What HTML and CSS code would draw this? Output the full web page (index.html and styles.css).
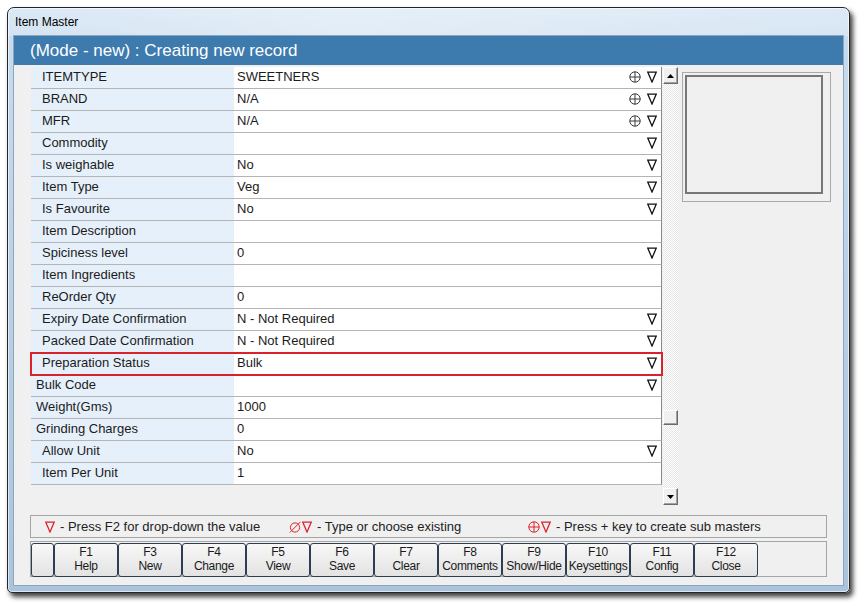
FILE: index.html
```html
<!DOCTYPE html>
<html>
<head>
<meta charset="utf-8">
<link rel="stylesheet" href="styles.css">
</head>
<body>
<div class="window">
  <div class="titlebar">Item Master</div>
  <div class="client">
    <div class="header">(Mode - new) : Creating new record</div>
    <div class="main">
      <div class="grid">
        <div class="row"><div class="lbl">ITEMTYPE</div><div class="val"><span class="txt">SWEETNERS</span><span class="icons"><svg class="plus" width="12" height="12" viewBox="0 0 12 12"><circle cx="6" cy="6" r="5.2"/><path d="M0.8 6H11.2M6 0.8V11.2"/></svg><svg class="nabla" width="10" height="12" viewBox="0 0 10 12"><path d="M0.8 1.2H9.2L5 11Z"/></svg></span></div></div>
        <div class="row"><div class="lbl">BRAND</div><div class="val"><span class="txt">N/A</span><span class="icons"><svg class="plus" width="12" height="12" viewBox="0 0 12 12"><circle cx="6" cy="6" r="5.2"/><path d="M0.8 6H11.2M6 0.8V11.2"/></svg><svg class="nabla" width="10" height="12" viewBox="0 0 10 12"><path d="M0.8 1.2H9.2L5 11Z"/></svg></span></div></div>
        <div class="row"><div class="lbl">MFR</div><div class="val"><span class="txt">N/A</span><span class="icons"><svg class="plus" width="12" height="12" viewBox="0 0 12 12"><circle cx="6" cy="6" r="5.2"/><path d="M0.8 6H11.2M6 0.8V11.2"/></svg><svg class="nabla" width="10" height="12" viewBox="0 0 10 12"><path d="M0.8 1.2H9.2L5 11Z"/></svg></span></div></div>
        <div class="row"><div class="lbl">Commodity</div><div class="val"><span class="txt"></span><span class="icons"><svg class="nabla" width="10" height="12" viewBox="0 0 10 12"><path d="M0.8 1.2H9.2L5 11Z"/></svg></span></div></div>
        <div class="row"><div class="lbl">Is weighable</div><div class="val"><span class="txt">No</span><span class="icons"><svg class="nabla" width="10" height="12" viewBox="0 0 10 12"><path d="M0.8 1.2H9.2L5 11Z"/></svg></span></div></div>
        <div class="row"><div class="lbl">Item Type</div><div class="val"><span class="txt">Veg</span><span class="icons"><svg class="nabla" width="10" height="12" viewBox="0 0 10 12"><path d="M0.8 1.2H9.2L5 11Z"/></svg></span></div></div>
        <div class="row"><div class="lbl">Is Favourite</div><div class="val"><span class="txt">No</span><span class="icons"><svg class="nabla" width="10" height="12" viewBox="0 0 10 12"><path d="M0.8 1.2H9.2L5 11Z"/></svg></span></div></div>
        <div class="row"><div class="lbl">Item Description</div><div class="val"><span class="txt"></span></div></div>
        <div class="row"><div class="lbl">Spiciness level</div><div class="val"><span class="txt">0</span><span class="icons"><svg class="nabla" width="10" height="12" viewBox="0 0 10 12"><path d="M0.8 1.2H9.2L5 11Z"/></svg></span></div></div>
        <div class="row"><div class="lbl">Item Ingredients</div><div class="val"><span class="txt"></span></div></div>
        <div class="row"><div class="lbl">ReOrder Qty</div><div class="val"><span class="txt">0</span></div></div>
        <div class="row"><div class="lbl">Expiry Date Confirmation</div><div class="val"><span class="txt">N - Not Required</span><span class="icons"><svg class="nabla" width="10" height="12" viewBox="0 0 10 12"><path d="M0.8 1.2H9.2L5 11Z"/></svg></span></div></div>
        <div class="row"><div class="lbl">Packed Date Confirmation</div><div class="val"><span class="txt">N - Not Required</span><span class="icons"><svg class="nabla" width="10" height="12" viewBox="0 0 10 12"><path d="M0.8 1.2H9.2L5 11Z"/></svg></span></div></div>
        <div class="row selected"><div class="lbl">Preparation Status</div><div class="val"><span class="txt">Bulk</span><span class="icons"><svg class="nabla" width="10" height="12" viewBox="0 0 10 12"><path d="M0.8 1.2H9.2L5 11Z"/></svg></span></div></div>
        <div class="row"><div class="lbl shallow">Bulk Code</div><div class="val"><span class="txt"></span><span class="icons"><svg class="nabla" width="10" height="12" viewBox="0 0 10 12"><path d="M0.8 1.2H9.2L5 11Z"/></svg></span></div></div>
        <div class="row"><div class="lbl shallow">Weight(Gms)</div><div class="val"><span class="txt">1000</span></div></div>
        <div class="row"><div class="lbl shallow">Grinding Charges</div><div class="val"><span class="txt">0</span></div></div>
        <div class="row"><div class="lbl">Allow Unit</div><div class="val"><span class="txt">No</span><span class="icons"><svg class="nabla" width="10" height="12" viewBox="0 0 10 12"><path d="M0.8 1.2H9.2L5 11Z"/></svg></span></div></div>
        <div class="row"><div class="lbl">Item Per Unit</div><div class="val"><span class="txt">1</span></div></div>
      </div>
      <div class="scrollbar">
        <div class="sbtn"><svg width="7" height="4" viewBox="0 0 7 4"><path d="M0 4H7L3.5 0Z"/></svg></div>
        <div class="track track-top"></div>
        <div class="thumb"></div>
        <div class="track track-bottom"></div>
        <div class="sbtn"><svg width="7" height="4" viewBox="0 0 7 4"><path d="M0 0H7L3.5 4Z"/></svg></div>
      </div>
      <div class="preview"><div class="preview-inner"></div></div>
    </div>
    <div class="legend">
      <span class="leg leg1"><svg class="nabla red" width="10" height="12" viewBox="0 0 10 12"><path d="M0.8 1.2H9.2L5 11Z"/></svg><span class="legtxt">- Press F2 for drop-down the value</span></span>
      <span class="leg leg2"><svg class="empty red" width="12" height="12" viewBox="0 0 12 12"><circle cx="6" cy="6.5" r="4.6"/><path d="M0.8 11.5L11.5 0.8"/></svg><svg class="nabla red" width="10" height="12" viewBox="0 0 10 12"><path d="M0.8 1.2H9.2L5 11Z"/></svg><span class="legtxt">- Type or choose existing</span></span>
      <span class="leg leg3"><svg class="plus red" width="12" height="12" viewBox="0 0 12 12"><circle cx="6" cy="6" r="5.2"/><path d="M0.8 6H11.2M6 0.8V11.2"/></svg><svg class="nabla red" width="10" height="12" viewBox="0 0 10 12"><path d="M0.8 1.2H9.2L5 11Z"/></svg><span class="legtxt">- Press + key to create sub masters</span></span>
    </div>
    <div class="buttons">
      <div class="fbtn blank"></div>
      <div class="fbtn"><span>F1</span><span>Help</span></div>
      <div class="fbtn"><span>F3</span><span>New</span></div>
      <div class="fbtn"><span>F4</span><span>Change</span></div>
      <div class="fbtn"><span>F5</span><span>View</span></div>
      <div class="fbtn"><span>F6</span><span>Save</span></div>
      <div class="fbtn"><span>F7</span><span>Clear</span></div>
      <div class="fbtn"><span>F8</span><span>Comments</span></div>
      <div class="fbtn"><span>F9</span><span>Show/Hide</span></div>
      <div class="fbtn"><span>F10</span><span>Keysettings</span></div>
      <div class="fbtn"><span>F11</span><span>Config</span></div>
      <div class="fbtn"><span>F12</span><span>Close</span></div>
    </div>
  </div>
</div>
</body>
</html>
```
FILE: styles.css
```css
html, body {
  margin: 0;
  padding: 0;
  background: #ffffff;
}
body {
  font-family: "Liberation Sans", Arial, sans-serif;
  width: 864px;
  height: 607px;
  overflow: hidden;
}
.window {
  margin: 7px 0 0 7px;
  width: 841px;
  height: 584px;
  border: 1px solid #262626;
  border-radius: 7px 7px 5px 5px;
  background: linear-gradient(180deg, #d2e3f3 0%, #c7dbee 6%, #bcd2e8 40%, #aac4de 100%);
  box-shadow: 3px 4px 5px rgba(0, 0, 0, 0.75), inset 0 0 0 1px rgba(255, 255, 255, 0.6);
  display: flex;
  flex-direction: column;
}
.titlebar {
  height: 28px;
  line-height: 28px;
  padding-left: 7px;
  font-size: 12px;
  color: #000;
  background: linear-gradient(90deg, rgba(255,255,255,0.2), rgba(255,255,255,0.45) 40%, rgba(255,255,255,0.25));
  border-radius: 6px 6px 0 0;
}
.client {
  margin: 0 6px 0 6px;
  width: 829px;
  height: 549px;
  background: #f0f0f0;
  box-shadow: 0 0 0 1px #8ea5bb;
  display: flex;
  flex-direction: column;
}
.header {
  height: 29px;
  line-height: 29px;
  background: #3d7aae;
  color: #ffffff;
  font-size: 17px;
  padding-left: 16px;
  flex: none;
}
.main {
  display: flex;
  align-items: flex-start;
  padding: 2px 0 0 17px;
  height: 438px;
  flex: none;
}
.grid {
  width: 631px;
  height: 438px;
  display: flex;
  flex-direction: column;
}
.row {
  display: flex;
  height: 21px;
  border-bottom: 1px solid #b4b4b4;
  border-right: 1px solid #8a8a8a;
  font-size: 13px;
  color: #1b1b1b;
}
.row.selected {
  outline: 2px solid #d8222c;
  outline-offset: -1px;
  position: relative;
  z-index: 1;
}
.lbl {
  width: 192px;
  padding-left: 11px;
  background: #e6f0fa;
  line-height: 19px;
  white-space: nowrap;
}
.lbl.shallow {
  width: 198px;
  padding-left: 5px;
}
.val {
  flex: 1;
  display: flex;
  align-items: flex-start;
  background: #ffffff;
  padding-left: 3px;
  padding-right: 4px;
}
.txt {
  flex: 1;
  line-height: 19px;
}
.icons {
  display: flex;
  align-items: center;
  gap: 6px;
  margin-top: 4px;
}
svg.plus circle, svg.plus path {
  fill: none;
  stroke: #3a3a3a;
  stroke-width: 1;
}
svg.nabla path {
  fill: none;
  stroke: #111;
  stroke-width: 1.3;
  stroke-linejoin: miter;
}
svg.red path, svg.red circle {
  stroke: #e0202a;
}
svg.empty circle, svg.empty path {
  fill: none;
  stroke-width: 1;
}
.scrollbar {
  width: 15px;
  height: 438px;
  margin-left: 1px;
  display: flex;
  flex-direction: column;
}
.sbtn, .thumb {
  height: 15px;
  background: #f0f0f0;
  border-top: 1px solid #ffffff;
  border-left: 1px solid #ffffff;
  border-right: 1px solid #6b6b6b;
  border-bottom: 1px solid #6b6b6b;
  box-sizing: border-box;
  box-shadow: inset -1px -1px 0 #a0a0a0;
  display: flex;
  align-items: center;
  justify-content: center;
  flex: none;
}
.sbtn {
  height: 17px;
}
.sbtn svg path {
  fill: #000;
}
.track {
  background-color: #ffffff;
  background-image: repeating-conic-gradient(#e6e6e6 0 25%, #ffffff 0 50%);
  background-size: 2px 2px;
}
.track-top {
  height: 326px;
}
.track-bottom {
  height: 63px;
}
.thumb {
  height: 15px;
}
.preview {
  margin-left: 4px;
  margin-top: 5px;
  width: 143px;
  height: 124px;
  border: 1px solid #a9a9a9;
  padding: 2px;
  box-sizing: content-box;
}
.preview-inner {
  width: 134px;
  height: 115px;
  border: 2px solid #777777;
  background: #f0f0f0;
}
.legend {
  margin: 10px 0 0 16px;
  width: 781px;
  height: 21px;
  border: 1px solid #a5a5a5;
  display: flex;
  align-items: center;
  padding-left: 14px;
  box-sizing: content-box;
  font-size: 13px;
  color: #222;
  flex: none;
}
.leg {
  display: flex;
  align-items: center;
}
.leg1 { width: 244px; }
.leg2 { width: 239px; }
.leg2 svg.empty { margin-right: 1px; }
.leg3 svg.plus { margin-right: 1px; }
.legtxt {
  margin-left: 5px;
}
.buttons {
  margin: 3px 0 0 16px;
  width: 795px;
  height: 33px;
  border: 1px solid #a5a5a5;
  padding: 1px 0 0 0;
  display: flex;
  box-sizing: content-box;
  flex: none;
}
.fbtn {
  width: 62px;
  height: 31px;
  border: 1px solid #2c3e50;
  border-radius: 3px;
  background: linear-gradient(180deg, #f8f8f8 0%, #ededed 50%, #e3e3e3 100%);
  display: flex;
  flex-direction: column;
  align-items: center;
  padding-top: 1px;
  box-sizing: content-box;
  font-size: 12px;
  line-height: 14px;
  color: #1a1a1a;
  letter-spacing: -0.3px;
}
.fbtn.blank {
  width: 21px;
}
```
